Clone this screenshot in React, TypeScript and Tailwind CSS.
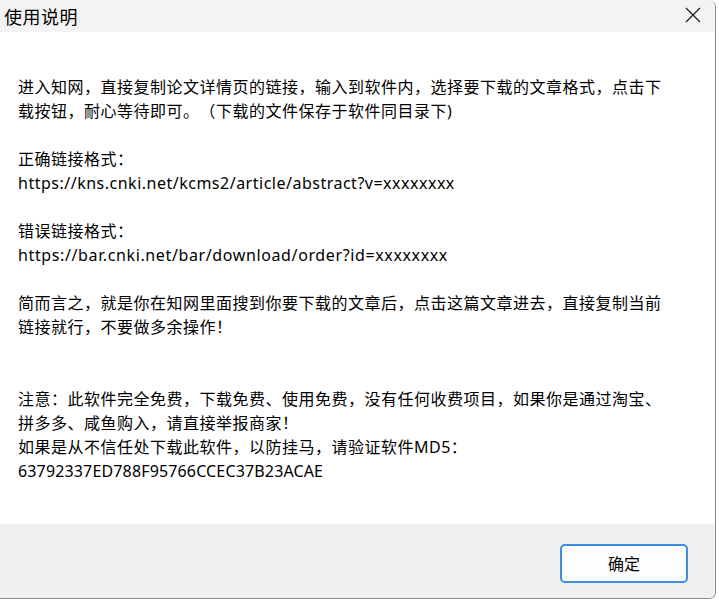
import React from "react";

const lines: { t: string; tr?: string }[] = [
  { t: "进入知网，直接复制论文详情页的链接，输入到软件内，选择要下载的文章格式，点击下" },
  { t: "载按钮，耐心等待即可。（下载的文件保存于软件同目录下)" },
  { t: "" },
  { t: "正确链接格式：" },
  { t: "https://kns.cnki.net/kcms2/article/abstract?v=xxxxxxxx" },
  { t: "" },
  { t: "错误链接格式：" },
  { t: "https://bar.cnki.net/bar/download/order?id=xxxxxxxx", tr: "tracking-[0.62px]" },
  { t: "" },
  { t: "简而言之，就是你在知网里面搜到你要下载的文章后，点击这篇文章进去，直接复制当前" },
  { t: "链接就行，不要做多余操作！" },
  { t: "" },
  { t: "" },
  { t: "注意：此软件完全免费，下载免费、使用免费，没有任何收费项目，如果你是通过淘宝、" },
  { t: "拼多多、咸鱼购入，请直接举报商家！" },
  { t: "如果是从不信任处下载此软件，以防挂马，请验证软件MD5：" },
  { t: "63792337ED788F95766CCEC37B23ACAE", tr: "tracking-[0.15px]" },
];

export default function App() {
  return (
    <div className="w-[719px] h-[600px] bg-white overflow-hidden">
      <div
        className="w-[716px] h-[599px] flex flex-col border-r border-b border-[#8a8a8a] rounded-br-[7px] rounded-tr-[7px] overflow-hidden text-black [text-spacing-trim:space-all]"
        style={{ fontFamily: '"Noto Sans", "Noto Sans CJK SC", sans-serif' }}
      >
        <div className="h-[32px] bg-[#f3f3f3] flex items-center justify-between pl-[4px] pr-[14px]">
          <span className="text-[18px] leading-none tracking-[0.5px]" style={{ fontFamily: '"Noto Sans CJK SC", sans-serif' }}>使用说明</span>
          <svg width="16" height="16" viewBox="0 0 16 16" className="mt-[-2px]">
            <path d="M1 1 L15 15 M15 1 L1 15" stroke="#1a1a1a" strokeWidth="1.2" fill="none" />
          </svg>
        </div>
        <div className="flex-1 bg-white pt-[43px] pl-[18px]">
          {lines.map((l, i) => (
            <div
              key={i}
              className={`h-[24px] leading-[24px] text-[16px] whitespace-nowrap ${l.tr ?? "tracking-[0.5px]"}`}
            >
              {l.t || "\u00a0"}
            </div>
          ))}
        </div>
        <div className="h-[74px] bg-[#f0f0f0] flex items-start justify-end pr-[27px] pt-[20px]">
          <button className="w-[128px] h-[39px] rounded-[5px] border-2 border-[#3b8ee0] bg-[#fdfdfd] text-[16px] text-black flex items-center justify-center">
            确定
          </button>
        </div>
      </div>
    </div>
  );
}
